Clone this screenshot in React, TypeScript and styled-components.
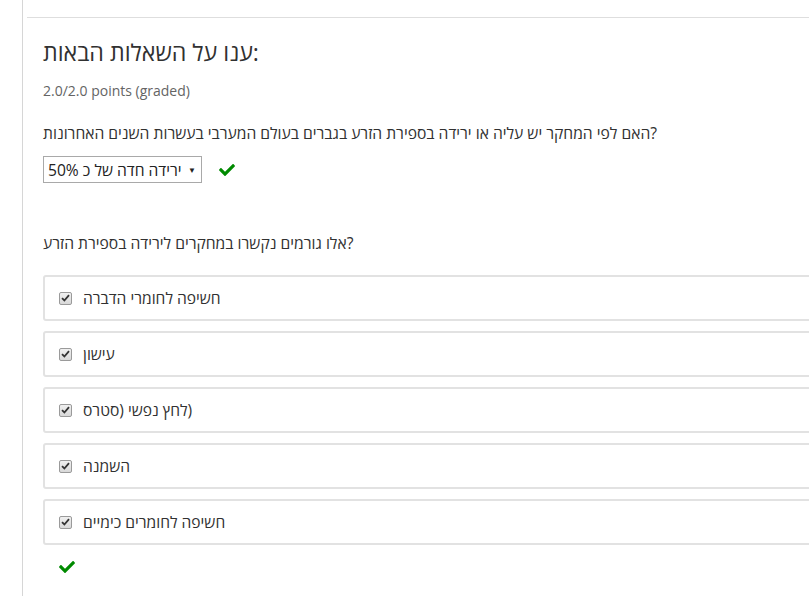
import React from 'react';
import styled, { createGlobalStyle } from 'styled-components';
import { FaCheck } from 'react-icons/fa';

const Global = createGlobalStyle`
  html, body { margin: 0; padding: 0; background: #fff; overflow: hidden; }
  body { font-family: "Open Sans", "Noto Sans", "Liberation Sans", sans-serif; color: #313131; }
`;

const Page = styled.div`
  margin-left: 22px;
  border-left: 1px solid #d6d6d6;
  min-height: 596px;
  padding: 17px 0 0 4px;
  box-sizing: border-box;
`;

const Divider = styled.div`
  height: 1px;
  background: #dedede;
`;

const Content = styled.div`
  padding: 0 0 0 16px;
  display: flex;
  flex-direction: column;
`;

const Title = styled.h2`
  margin: 21px 0 0;
  font-size: 23.2px;
  font-weight: 400;
  line-height: 26px;
  color: #313131;
`;

const Points = styled.div`
  margin-top: 16px;
  font-size: 14px;
  line-height: 20px;
  color: #646464;
`;

const Question = styled.p<{ $top: number }>`
  margin: ${(p) => p.$top}px 0 0;
  font-size: 15.65px;
  line-height: 20px;
  color: #313131;
`;

const AnswerRow = styled.div`
  display: flex;
  align-items: center;
  gap: 16px;
  margin-top: 13px;
`;

const SelectBox = styled.div`
  display: flex;
  align-items: center;
  justify-content: space-between;
  width: 159px;
  height: 27px;
  box-sizing: border-box;
  border: 1px solid #a9a9a9;
  padding: 0 5px 0 4px;
  font-size: 15.6px;
  color: #222;
  background: #fff;
`;

const Arrow = styled.span`
  font-size: 8px;
  color: #222;
`;

const GreenCheck = styled(FaCheck)`
  color: #008a00;
  width: 18px;
  height: 16px;
`;

const ChoiceList = styled.div`
  display: flex;
  flex-direction: column;
  gap: 10px;
  margin-top: 22px;
  width: 800px;
`;

const Choice = styled.label`
  display: flex;
  align-items: center;
  gap: 11px;
  height: 46px;
  box-sizing: border-box;
  padding: 0 14px;
  border: 2px solid #e2e2e2;
  border-radius: 3px;
  font-size: 15.6px;
  color: #313131;
`;

const Box = styled.span`
  display: inline-flex;
  align-items: center;
  justify-content: center;
  width: 13px;
  height: 13px;
  box-sizing: border-box;
  border: 1px solid #9a9a9a;
  border-radius: 2px;
  background: linear-gradient(#f0f0f0, #d8d8d8);
`;

const FinalCheck = styled.div`
  margin: 14px 0 0 15px;
  display: flex;
`;

const CheckGlyph = () => (
  <svg width="9" height="8" viewBox="0 0 9 8">
    <path d="M1 4.2 L3.4 6.5 L8 1.2" fill="none" stroke="#333" strokeWidth="1.8" />
  </svg>
);

const choices = [
  'חשיפה לחומרי הדברה',
  'עישון',
  'לחץ נפשי (סטרס\u2066)\u2069',
  'השמנה',
  'חשיפה לחומרים כימיים',
];

export default function App() {
  return (
    <>
      <Global />
      <Page>
        <Divider />
        <Content>
          <Title>ענו על השאלות הבאות:</Title>
          <Points>2.0/2.0 points (graded)</Points>
          <Question $top={22}>
            האם לפי המחקר יש עליה או ירידה בספירת הזרע בגברים בעולם המערבי בעשרות השנים האחרונות?
          </Question>
          <AnswerRow>
            <SelectBox>
              <span>ירידה חדה של כ 50%</span>
              <Arrow>▼</Arrow>
            </SelectBox>
            <GreenCheck />
          </AnswerRow>
          <Question $top={50}>אלו גורמים נקשרו במחקרים לירידה בספירת הזרע?</Question>
          <ChoiceList>
            {choices.map((c) => (
              <Choice key={c}>
                <Box>
                  <CheckGlyph />
                </Box>
                <span>{c}</span>
              </Choice>
            ))}
          </ChoiceList>
          <FinalCheck>
            <GreenCheck />
          </FinalCheck>
        </Content>
      </Page>
    </>
  );
}
